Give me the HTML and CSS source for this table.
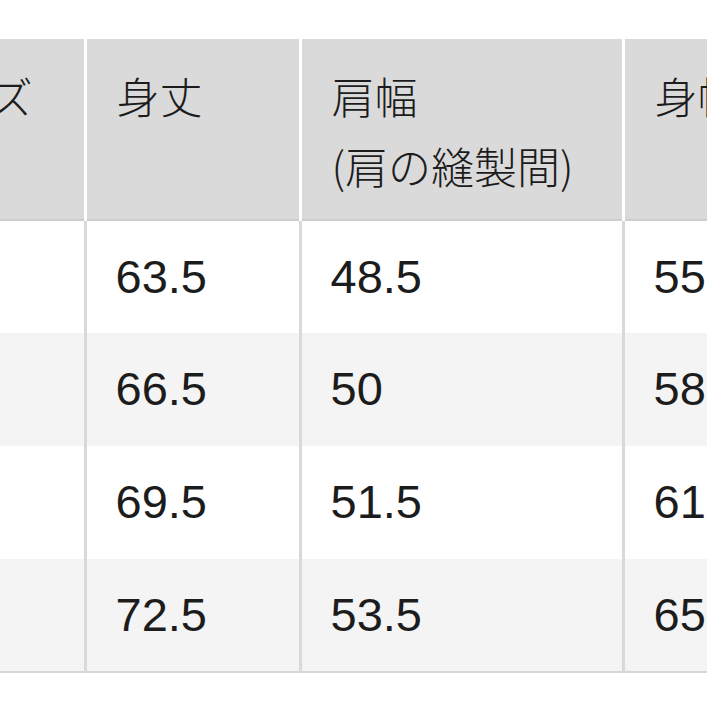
FILE: index.html
```html
<!DOCTYPE html>
<html lang="ja">
<head>
<meta charset="utf-8">
<link rel="stylesheet" href="styles.css">
</head>
<body>
<div class="viewport">
<table class="size-table">
  <colgroup>
    <col class="c1"><col class="c2"><col class="c3"><col class="c4"><col class="c5">
  </colgroup>
  <thead>
    <tr>
      <th>サイズ</th>
      <th>身丈</th>
      <th>肩幅<br>(肩の縫製間)</th>
      <th>身幅</th>
      <th>袖丈</th>
    </tr>
  </thead>
  <tbody>
    <tr><td>S</td><td>63.5</td><td>48.5</td><td>55</td><td>20</td></tr>
    <tr class="alt"><td>M</td><td>66.5</td><td>50</td><td>58</td><td>21</td></tr>
    <tr><td>L</td><td>69.5</td><td>51.5</td><td>61</td><td>22</td></tr>
    <tr class="alt"><td>XL</td><td>72.5</td><td>53.5</td><td>65</td><td>23</td></tr>
  </tbody>
</table>
</div>
</body>
</html>
```
FILE: styles.css
```css
html, body {
  margin: 0;
  padding: 0;
  background: #ffffff;
}
.viewport {
  width: 707px;
  height: 707px;
  overflow: hidden;
  padding-top: 39px;
  box-sizing: border-box;
}
.size-table {
  margin-left: -125px;
  border-collapse: collapse;
  table-layout: fixed;
  width: 1180px;
  color: #1c1c1c;
}
.c1 { width: 210px; }
.c2 { width: 215px; }
.c3 { width: 323px; }
.c4 { width: 215px; }
.c5 { width: 217px; }

.size-table th {
  background: #dadada;
  font-family: "Noto Sans CJK JP", "Liberation Sans", sans-serif;
  font-weight: 300;
  font-size: 43px;
  line-height: 70px;
  text-align: left;
  vertical-align: top;
  height: 181px;
  box-sizing: border-box;
  padding: 21px 10px 0 30px;
  border-left: 3px solid #ffffff;
  border-bottom: 2px solid #cdcdcd;
  white-space: nowrap;
}
.size-table th:first-child { border-left: none; }

.size-table td {
  font-family: "Liberation Sans", "Noto Sans CJK JP", sans-serif;
  font-size: 47px;
  line-height: 1;
  height: 113px;
  box-sizing: border-box;
  padding: 0 10px 2px 29px;
  vertical-align: middle;
  border-left: 3px solid #d9d9d9;
  background: #ffffff;
}
.size-table td:first-child { border-left: none; }
.size-table tr.alt td { background: #f4f4f4; }
.size-table tbody tr:last-child td { border-bottom: 2px solid #d6d6d6; }
```
